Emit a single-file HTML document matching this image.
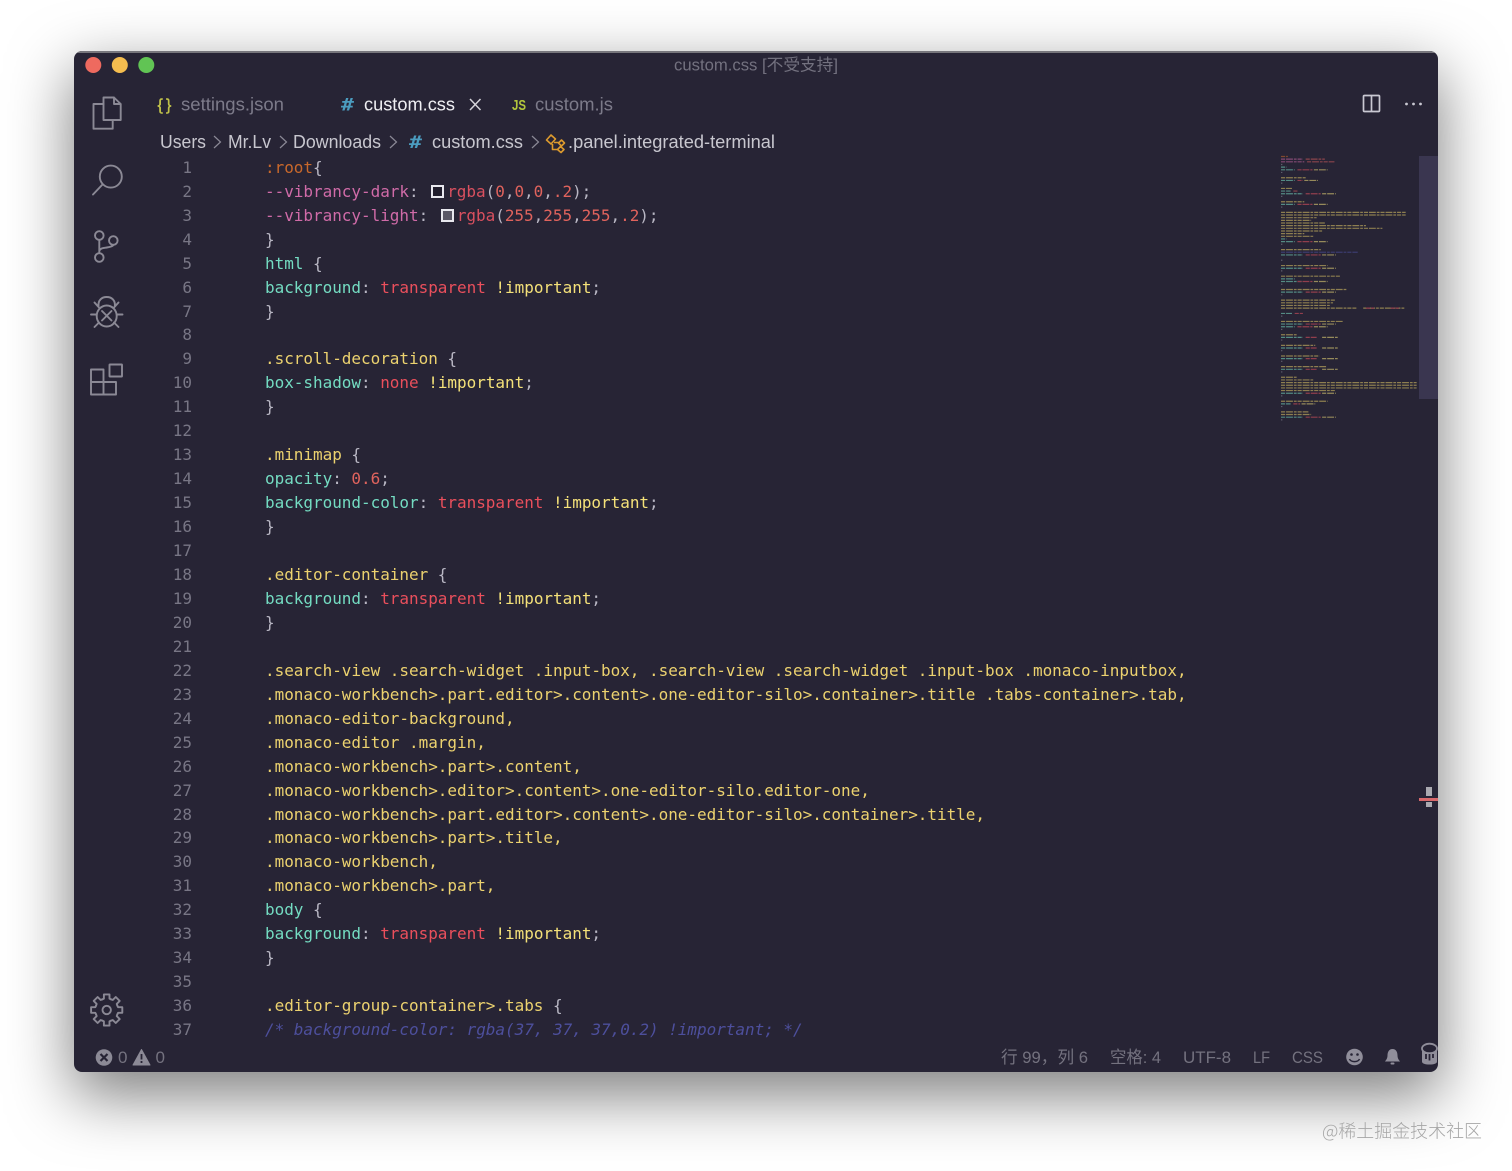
<!DOCTYPE html>
<html lang="zh-CN"><head><meta charset="utf-8"><title>custom.css</title>
<style>
html,body{margin:0;padding:0;background:#fff;width:1512px;height:1171px;overflow:hidden}
#win{position:absolute;left:74px;top:51px;width:1364px;height:1021px;background:#272435;border-radius:8px;box-shadow:0 22px 62px 2px rgba(0,0,0,.5);overflow:hidden}
#top{position:absolute;left:0;top:0;width:100%;height:1.5px;background:#77767c}
svg{position:absolute;left:0;top:0;filter:blur(.3px)}
pre{position:absolute;margin:0;font-family:"DejaVu Sans Mono","Liberation Mono",monospace;font-size:16px;line-height:23.95px;white-space:pre;color:#b9b7c4;filter:blur(.3px)}
#nums{left:0;top:104.8px;width:118px;text-align:right;color:#787685}
#code{left:191px;top:104.8px;letter-spacing:-.033px}
.y{color:#ecd26f}.t{color:#74dcc2}.r{color:#ea4f5c}.i{color:#f4e179}.n{color:#e0635d}.p{color:#d06ba8}.o{color:#c8682b}.f{color:#d9505f}.c{color:#4d4f9c;font-style:italic}
.sw{display:inline-block;width:9px;height:9px;border:2px solid #e8e8ee;margin:0 3px 0 3px;vertical-align:-1px}
</style></head><body>
<div id="win">
<div id="top"></div>
<pre id="nums">1
2
3
4
5
6
7
8
9
10
11
12
13
14
15
16
17
18
19
20
21
22
23
24
25
26
27
28
29
30
31
32
33
34
35
36
37</pre>
<pre id="code"><span class="o">:root</span>{
<span class="p">--vibrancy-dark</span>: <span class="sw" style="background:#201d2c"></span><span class="f">rgba</span>(<span class="n">0</span>,<span class="n">0</span>,<span class="n">0</span>,<span class="n">.2</span>);
<span class="p">--vibrancy-light</span>: <span class="sw" style="background:#5a5866"></span><span class="f">rgba</span>(<span class="n">255</span>,<span class="n">255</span>,<span class="n">255</span>,<span class="n">.2</span>);
}
<span class="t">html</span> {
<span class="t">background</span>: <span class="r">transparent</span> <span class="i">!important</span>;
}

<span class="y">.scroll-decoration</span> {
<span class="t">box-shadow</span>: <span class="r">none</span> <span class="i">!important</span>;
}

<span class="y">.minimap</span> {
<span class="t">opacity</span>: <span class="n">0.6</span>;
<span class="t">background-color</span>: <span class="r">transparent</span> <span class="i">!important</span>;
}

<span class="y">.editor-container</span> {
<span class="t">background</span>: <span class="r">transparent</span> <span class="i">!important</span>;
}

<span class="y">.search-view .search-widget .input-box, .search-view .search-widget .input-box .monaco-inputbox,</span>
<span class="y">.monaco-workbench&gt;.part.editor&gt;.content&gt;.one-editor-silo&gt;.container&gt;.title .tabs-container&gt;.tab,</span>
<span class="y">.monaco-editor-background,</span>
<span class="y">.monaco-editor .margin,</span>
<span class="y">.monaco-workbench&gt;.part&gt;.content,</span>
<span class="y">.monaco-workbench&gt;.editor&gt;.content&gt;.one-editor-silo.editor-one,</span>
<span class="y">.monaco-workbench&gt;.part.editor&gt;.content&gt;.one-editor-silo&gt;.container&gt;.title,</span>
<span class="y">.monaco-workbench&gt;.part&gt;.title,</span>
<span class="y">.monaco-workbench,</span>
<span class="y">.monaco-workbench&gt;.part,</span>
<span class="t">body</span> {
<span class="t">background</span>: <span class="r">transparent</span> <span class="i">!important</span>;
}

<span class="y">.editor-group-container&gt;.tabs</span> {
<span class="c">/* background-color: rgba(37, 37, 37,0.2) !important; */</span></pre>
</div>

<svg width="1512" height="1171" viewBox="0 0 1512 1171" font-family="'Liberation Sans','Noto Sans CJK SC',sans-serif">
<defs><clipPath id="wc"><rect x="74" y="51" width="1364" height="1021" rx="8"/></clipPath></defs>

<!-- traffic lights -->
<circle cx="93.3" cy="65" r="8" fill="#ee6a5f"/><circle cx="119.8" cy="65" r="8" fill="#f5bd4f"/><circle cx="146.3" cy="65" r="8" fill="#61c454"/>

<!-- title & tabs -->
<text x="674" y="70.5" font-size="16.5" fill="#73717f" textLength="164" lengthAdjust="spacingAndGlyphs">custom.css [不受支持]</text>
<text x="157.500" y="110" font-size="16" fill="#c3c44a" stroke="#c3c44a" stroke-width=".4">{</text>
<text x="166" y="110" font-size="16" fill="#c3c44a" stroke="#c3c44a" stroke-width=".4">}</text>
<text x="181" y="110.5" font-size="18" fill="#7c7a89" textLength="103" lengthAdjust="spacingAndGlyphs">settings.json</text>
<text x="341" y="110.5" font-size="17" font-weight="700" font-family="'DejaVu Sans Mono',monospace" fill="#4b9cbf" textLength="13" lengthAdjust="spacingAndGlyphs">#</text>
<text x="364" y="110.5" font-size="18" fill="#eeeef2" textLength="91" lengthAdjust="spacingAndGlyphs">custom.css</text>
<path d="M470 99l10.500 11M480.500 99l-10.500 11" stroke="#d5d4da" stroke-width="1.500" fill="none"/>
<text x="512" y="110" font-size="15" font-weight="700" fill="#b3c63c" textLength="14" lengthAdjust="spacingAndGlyphs">JS</text>
<text x="535" y="110.500" font-size="18" fill="#7c7a89" textLength="78" lengthAdjust="spacingAndGlyphs">custom.js</text>
<rect x="1363.500" y="95.500" width="16" height="16" rx="1" fill="none" stroke="#c9c8d2" stroke-width="1.700"/><path d="M1371.500 96v15" stroke="#c9c8d2" stroke-width="1.700"/>
<circle cx="1406.500" cy="104" r="1.400" fill="#c9c8d2"/><circle cx="1413.500" cy="104" r="1.400" fill="#c9c8d2"/><circle cx="1420.500" cy="104" r="1.400" fill="#c9c8d2"/>

<!-- breadcrumb -->
<g font-size="18" fill="#c8c7cf">
<text x="160" y="148" textLength="46" lengthAdjust="spacingAndGlyphs">Users</text>
<text x="228" y="148" textLength="43" lengthAdjust="spacingAndGlyphs">Mr.Lv</text>
<text x="293" y="148" textLength="88" lengthAdjust="spacingAndGlyphs">Downloads</text>
<text x="432" y="148" textLength="91" lengthAdjust="spacingAndGlyphs">custom.css</text>
<text x="568" y="148" textLength="207" lengthAdjust="spacingAndGlyphs">.panel.integrated-terminal</text>
</g>
<text x="409" y="148" font-size="17" font-weight="700" font-family="'DejaVu Sans Mono',monospace" fill="#4b9cbf" textLength="13" lengthAdjust="spacingAndGlyphs">#</text>
<path d="M214 136l6.500 6-6.500 6M280 136l6.500 6-6.500 6M390 136l6.500 6-6.500 6M532 136l6.500 6-6.500 6" fill="none" stroke="#8b8996" stroke-width="1.200"/>
<g fill="none" stroke="#dc9a2e" stroke-width="1.600" stroke-linejoin="round">
<path d="M546.500 140l4.500-5 4.500 4-4.500 5zM558.500 143l3-3 3 3-3 3zM557.500 149.500l3-3 3.500 3-3 3zM552.500 144v5.500h5M554 142.500h5"/>
</g>

<!-- activity bar icons -->
<g fill="none" stroke="#8b8995" stroke-width="1.900" stroke-linejoin="round" stroke-linecap="round">
<path d="M103.500 97.500H114L120.700 104V120H103.500ZM114 97.500V104H120.700"/>
<path d="M103.500 104H93.500V128.700H112.700V120"/>
<circle cx="110.800" cy="176.600" r="11"/><path d="M102.500 184.500L93 194.500"/>
<circle cx="99.300" cy="235.500" r="4.300"/><circle cx="113.300" cy="240.500" r="4.300"/><circle cx="99.300" cy="257.500" r="4.300"/>
<path d="M99.300 240v13M99.300 251c1-3 4-3 7.500-3.500 3.500-.5 6.500-1.500 6.500-2.700"/>
<!-- bug -->
<ellipse cx="106.700" cy="316" rx="10" ry="10.500"/>
<path d="M98.500 306c-.5-5.500 3-9 8.200-9s8.700 3.500 8.200 9M102 311l9.500 9.500M111.500 311l-9.500 9.500"/>
<path d="M91 314.500h5.500M117 314.500h5.500M94.500 302.500l4.500 5M118.500 302.500l-4.500 5M94.500 327l4.500-4.500M118.500 327l-4.500-4.500"/>
<!-- extensions -->
<path d="M91 369.500h12.500v25H91zM91 382h25v12.500h-12.500"/>
<rect x="109.500" y="364.500" width="12.500" height="12" rx=".5"/>
<!-- gear -->
<g transform="translate(106.700 1010)" stroke-width="1.900">
<circle r="4.200"/>
<path d="M10.600-4.400L11.400-2.800 15.600-2.800V2.800L11.400 2.800 10.600 4.400"/>
<path transform="rotate(45)" d="M10.600-4.400L11.400-2.800 15.600-2.800V2.800L11.400 2.800 10.600 4.400"/>
<path transform="rotate(90)" d="M10.600-4.400L11.400-2.800 15.600-2.800V2.800L11.400 2.800 10.600 4.400"/>
<path transform="rotate(135)" d="M10.600-4.400L11.400-2.800 15.600-2.800V2.800L11.400 2.800 10.600 4.400"/>
<path transform="rotate(180)" d="M10.600-4.400L11.400-2.800 15.600-2.800V2.800L11.400 2.800 10.600 4.400"/>
<path transform="rotate(225)" d="M10.600-4.400L11.400-2.800 15.600-2.800V2.800L11.400 2.800 10.600 4.400"/>
<path transform="rotate(270)" d="M10.600-4.400L11.400-2.800 15.600-2.800V2.800L11.400 2.800 10.600 4.400"/>
<path transform="rotate(315)" d="M10.600-4.400L11.400-2.800 15.600-2.800V2.800L11.400 2.800 10.600 4.400"/>
</g>
</g>

<!-- status bar -->
<circle cx="104" cy="1057.500" r="8.300" fill="#8c8a96"/><path d="M100.500 1054l7 7M107.500 1054l-7 7" stroke="#272435" stroke-width="2.200"/>
<path d="M141.500 1049.500l8.500 15.500h-17z" fill="#8c8a96" stroke="#8c8a96" stroke-linejoin="round"/><path d="M141.500 1054v5.500M141.500 1061v2" stroke="#272435" stroke-width="1.800"/>
<g font-size="17" fill="#74727f">
<text x="118" y="1063" textLength="9.500" lengthAdjust="spacingAndGlyphs">0</text>
<text x="155.500" y="1063" textLength="9.500" lengthAdjust="spacingAndGlyphs">0</text>
<text x="1001" y="1063" textLength="87" lengthAdjust="spacingAndGlyphs">行 99，列 6</text>
<text x="1110" y="1063" textLength="51" lengthAdjust="spacingAndGlyphs">空格: 4</text>
<text x="1183" y="1063" textLength="48" lengthAdjust="spacingAndGlyphs">UTF-8</text>
<text x="1253" y="1063" textLength="17" lengthAdjust="spacingAndGlyphs">LF</text>
<text x="1292" y="1063" textLength="31" lengthAdjust="spacingAndGlyphs">CSS</text>
</g>
<circle cx="1354.500" cy="1057" r="8.300" fill="#908e9a"/>
<circle cx="1351.500" cy="1054.500" r="1.300" fill="#272435"/><circle cx="1357.500" cy="1054.500" r="1.300" fill="#272435"/>
<path d="M1349.500 1059c1.500 3.500 8.500 3.500 10 0" fill="none" stroke="#272435" stroke-width="1.500"/>
<path d="M1392.500 1049c3.500 0 5 3 5 6.500 0 3 1.500 4.500 2.500 6h-15c1-1.500 2.500-3 2.500-6 0-3.500 1.500-6.500 5-6.500z" fill="#908e9a"/><rect x="1390.500" y="1062.500" width="4" height="2" rx="1" fill="#908e9a"/>
<g clip-path="url(#wc)">
<ellipse cx="1429.500" cy="1048.500" rx="7.500" ry="4.800" fill="none" stroke="#908e9a" stroke-width="1.800"/>
<path d="M1422 1050.500v11c0 2 3 3 7.500 3s7.500-1 7.500-3v-11c-2 2.500-13 2.500-15 0z" fill="#908e9a"/>
<path d="M1426 1054v5M1429.500 1054v6.500M1433 1054v4" stroke="#272435" stroke-width="1.800"/>
</g>

<!-- scrollbar -->
<rect x="1419" y="156" width="19" height="243" fill="#3a3650"/>
<rect x="1426" y="787" width="6" height="9" fill="#aaa9b0"/><rect x="1426" y="802" width="6" height="5" fill="#aaa9b0"/>
<rect x="1419" y="798" width="19" height="3" fill="#d8696c"/>

<!-- minimap -->
<g transform="translate(1281 156.500) scale(1.37 2.66)" stroke-width=".45" fill="none" opacity=".55" stroke-dasharray="3 .7 5 .7 2 .7">
<path stroke="#e2c966" d="M0 8h18M0 12h8M0 17h17M0 21h91M0 22h91M0 23h26M0 24h22M0 25h32M0 26h62M0 27h74M0 28h30M0 29h17M0 30h24M0 35h29M0 41h34M0 45h43M0 50h48M0 54h40M0 55h38M0 56h36M0 57h55M60 57h30M0 62h45M0 67h12M0 71h25M0 75h28M0 79h33M0 83h12M0 84h24M0 85h99M0 86h99M0 87h99M0 88h40M0 92h34M0 96h20M0 97h22"/>
<path stroke="#7be0c5" d="M0 4h4M0 5h10M0 9h10M0 13h7M0 14h16M0 18h10M0 31h4M0 32h10M0 37h16M0 42h16M0 46h10M0 47h16M0 51h16M0 59h8M0 63h16M0 64h10M0 68h16M0 72h16M0 76h16M0 80h16M0 89h16M0 93h7M0 98h16"/>
<path stroke="#ea5561" d="M12 5h11M12 9h4M18 14h11M12 18h11M12 32h11M18 37h11M18 42h11M12 47h11M18 51h11M62 57h6M80 57h6M10 59h6M18 63h11M12 64h11M18 68h8M18 72h8M18 76h8M18 80h8M18 89h11M9 93h5M18 98h11"/>
<path stroke="#f2df7a" d="M24 5h10M17 9h10M30 14h10M24 18h10M24 32h10M30 37h10M30 42h10M24 47h10M30 51h10M30 63h10M24 64h10M30 68h12M30 72h12M30 76h12M30 80h12M30 89h10M15 93h10M30 98h10"/>
<path stroke="#d16ba8" d="M0 1h16M0 2h17"/>
<path stroke="#c8682b" d="M0 0h5"/>
<path stroke="#e06060" d="M18 1h14M19 2h20M9 13h3"/>
<path stroke="#4d4f9c" d="M0 36h56"/>
<path stroke="#8c8a96" d="M0 3h1M0 6h1M0 10h1M0 15h1M0 19h1M0 33h1M0 39h1M0 43h1M0 48h1M0 52h1M0 60h1M0 65h1M0 69h1M0 73h1M0 77h1M0 81h1M0 90h1M0 94h1M0 99h1"/>
</g>

<!-- watermark -->
<text x="1322" y="1137.500" font-size="18" fill="#a6a6a6" font-family="'Noto Sans CJK SC','Liberation Sans',sans-serif" font-weight="300" textLength="160" lengthAdjust="spacingAndGlyphs">@稀土掘金技术社区</text>
</svg>
</body></html>
